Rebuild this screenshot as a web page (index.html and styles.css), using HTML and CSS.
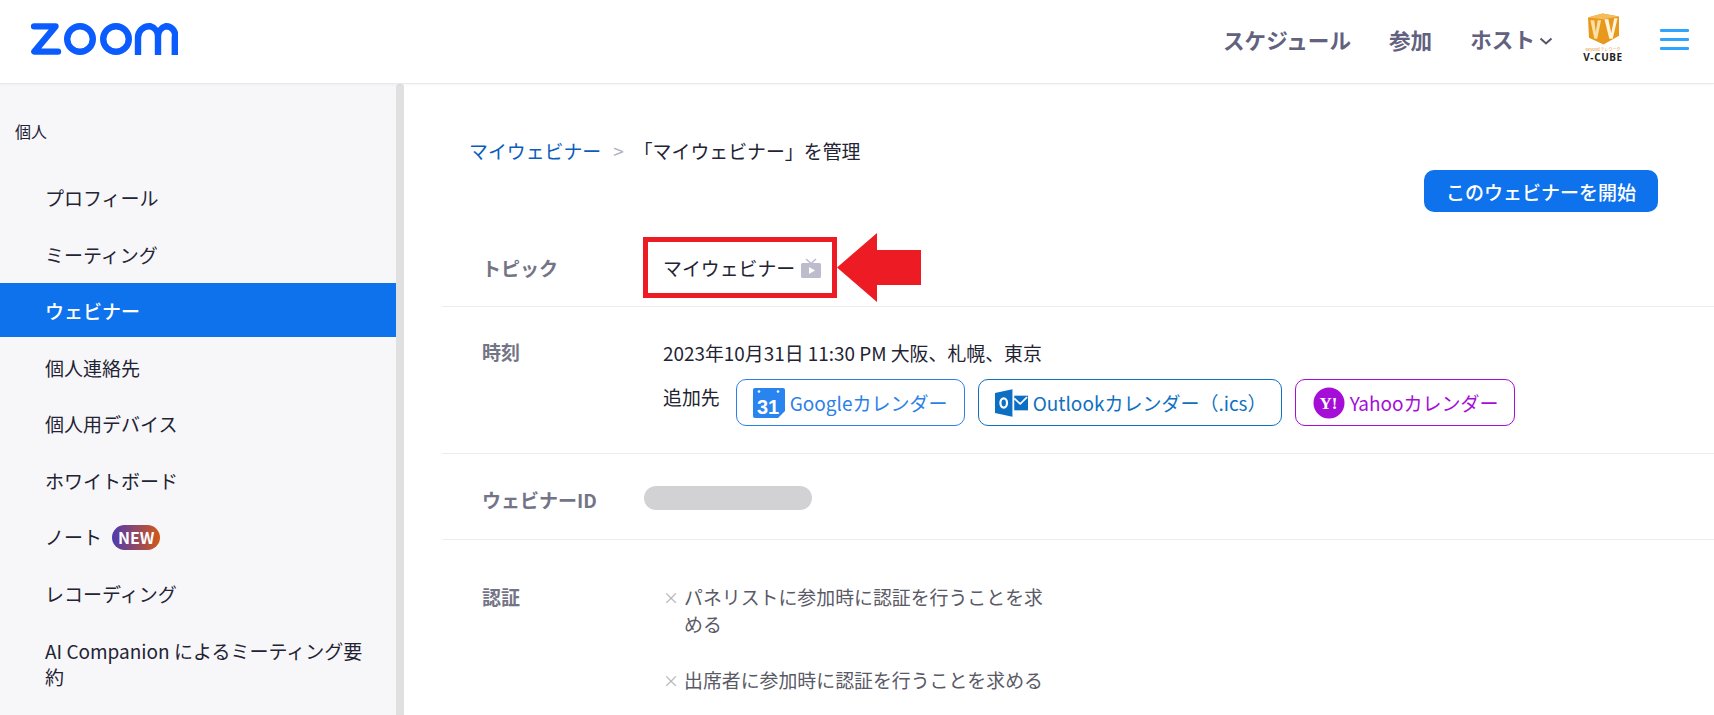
FILE: index.html
```html
<!DOCTYPE html>
<html lang="ja">
<head>
<meta charset="utf-8">
<title>マイウェビナー</title>
<link rel="stylesheet" href="styles.css">
</head>
<body>
<header class="topbar">
  <svg class="logo" viewBox="0 0 147 32" width="147" height="32" aria-label="zoom">
    <g fill="none" stroke="#0b5cff" stroke-width="6.4">
      <path d="M3 3.4H24.5L3.4 28.6H27" stroke-linejoin="round" stroke-linecap="round"/>
      <circle cx="49" cy="16" r="12.8"/>
      <circle cx="85" cy="16" r="12.8"/>
      <path d="M107 32V14.5A11.3 11.3 0 0 1 118.300 3.200H119A11 11 0 0 1 127 14.500V32M127 14.500A11 11 0 0 1 135 3.200A9 9 0 0 1 143.800 14.500V32"/>
    </g>
  </svg>
  <nav class="topnav">
    <a class="topnav-link">スケジュール</a>
    <a class="topnav-link">参加</a>
    <a class="topnav-link host">ホスト<svg class="caret" viewBox="0 0 14 8" width="14" height="8"><path d="M1.500 1.500 7 6.500 12.500 1.500" fill="none" stroke="#55556a" stroke-width="2"/></svg></a>
    <div class="brand">
      <svg viewBox="0 0 32 32" width="31" height="32">
        <path d="M0 4 15 0 32 3V23L16 32 1 25Z" fill="#e8981a"/>
        <path d="M0 4 15 0 32 3 16 6Z" fill="#f4bc5a"/>
        <path d="M2.500 7H6.500L8 19 10 7H13.500L9.500 26H6.500Z" fill="#f9dfa8"/>
        <path d="M17 6H21L24 20 27 5H30.500L25.500 26H22Z" fill="#fff4dc"/>
      </svg>
      <span class="brand-tag">Beyond テレワーク</span>
      <span class="brand-name">V-CUBE</span>
    </div>
    <div class="burger"><i></i><i></i><i></i></div>
  </nav>
</header>
<div class="layout">
  <aside class="sidebar">
    <div class="side-title">個人</div>
    <ul class="side-list">
      <li class="side-item">プロフィール</li>
      <li class="side-item">ミーティング</li>
      <li class="side-item active">ウェビナー</li>
      <li class="side-item">個人連絡先</li>
      <li class="side-item">個人用デバイス</li>
      <li class="side-item">ホワイトボード</li>
      <li class="side-item">ノート<span class="badge">NEW</span></li>
      <li class="side-item">レコーディング</li>
      <li class="side-item">AI Companion によるミーティング要約</li>
    </ul>
  </aside>
  <div class="scrolltrack"></div>
  <main class="content">
    <div class="crumbs"><a class="crumb-link">マイウェビナー</a><span class="crumb-sep">&gt;</span><span>「マイウェビナー」を管理</span></div>
    <div class="actions"><button class="start">このウェビナーを開始</button></div>
    <section class="row row-topic">
      <div class="label">トピック</div>
      <div class="value topic">マイウェビナー
        <svg class="tv" viewBox="0 0 20 20" width="20" height="20"><path d="M5 1 10 5.500 15 1" fill="none" stroke="#bcbccd" stroke-width="1.600"/><rect y="5" width="20" height="15" rx="1.500" fill="#bcbccd"/><path d="M8 9 14 12.500 8 16Z" fill="#fff"/></svg>
        <span class="mark"></span>
        <svg class="arrow" viewBox="0 0 84 69" width="84" height="69"><path d="M0 34.500 40 0V17H84V52H40V69Z" fill="#ed1c24"/></svg>
      </div>
    </section>
    <section class="row row-time">
      <div class="label">時刻</div>
      <div class="value">
        <div class="when">2023年10月31日 11:30 PM 大阪、札幌、東京</div>
        <div class="addto">
          <span class="addto-label">追加先</span>
          <a class="cal cal-google">
            <svg viewBox="0 0 32 30" width="32" height="30"><path d="M2 0H30A2 2 0 0 1 32 2V23L25 30H2A2 2 0 0 1 0 28V2A2 2 0 0 1 2 0Z" fill="#2a84f0"/><circle cx="6" cy="3.500" r="1.300" fill="#fff"/><circle cx="25" cy="3.500" r="1.300" fill="#fff"/><text x="15" y="26" class="cal-num">31</text></svg>
            Googleカレンダー</a>
          <a class="cal cal-outlook">
            <svg viewBox="0 0 36 30" width="33" height="30"><path d="M0 4 19 0V30L0 26Z" fill="#0d6fc4"/><ellipse cx="9.500" cy="15" rx="3.600" ry="5" fill="none" stroke="#fff" stroke-width="2.400"/><rect x="21" y="7" width="15" height="16" fill="#0d6fc4"/><path d="M21 10 27.500 16 35 8.500" fill="none" stroke="#fff" stroke-width="1.800"/></svg>
            Outlookカレンダー（.ics）</a>
          <a class="cal cal-yahoo">
            <svg viewBox="0 0 32 32" width="32" height="32"><circle cx="16" cy="16" r="15.500" fill="#a50ed6"/><text x="15.500" y="21.500" class="y-mark">Y!</text></svg>
            Yahooカレンダー</a>
        </div>
      </div>
    </section>
    <section class="row row-id">
      <div class="label">ウェビナーID</div>
      <div class="value"><div class="redacted"></div></div>
    </section>
    <section class="row row-auth">
      <div class="label">認証</div>
      <div class="value auth">
        <div class="check"><span class="x">×</span><span>パネリストに参加時に認証を行うことを求める</span></div>
        <div class="check"><span class="x">×</span><span>出席者に参加時に認証を行うことを求める</span></div>
      </div>
    </section>
  </main>
</div>
</body>
</html>
```

FILE: styles.css
```css
* { box-sizing: border-box; }
html, body { margin: 0; height: 715px; overflow: hidden; }
body {
  font-family: "Noto Sans CJK JP", "Noto Sans", sans-serif;
  color: #232333;
  background: #fff;
  display: flex;
  flex-direction: column;
}
.topbar {
  flex: 0 0 84px;
  display: flex;
  align-items: flex-start;
  justify-content: space-between;
  padding: 23px 25px 0 31px;
  border-bottom: 1px solid #e9e9ec;
  box-shadow: 0 1px 2px rgba(0,0,0,.04);
  position: relative;
}
.topnav { display: flex; align-items: flex-start; margin-top: -10px; }
.topnav-link {
  font-size: 21.600px;
  font-weight: 700;
  line-height: 30px;
  color: #626280;
  margin-top: 12px;
  margin-right: 38px;
}
.topnav-link.host { margin-right: 0; margin-top: 11px; display: flex; align-items: center; }
.caret { margin-left: 4px; margin-top: 4px; }
.brand {
  width: 44px;
  margin-left: 28px;
  display: flex;
  flex-direction: column;
  align-items: center;
}
.brand-tag { font-size: 4px; line-height: 6px; color: #e8902a; white-space: nowrap; margin-top: 1px; }
.brand-name { font-size: 10px; line-height: 10px; font-weight: 700; letter-spacing: .6px; color: #222; font-family: "Noto Sans", sans-serif; white-space: nowrap; }
.burger { width: 29px; margin-left: 35px; margin-top: 16px; display: flex; flex-direction: column; gap: 6.500px; }
.burger i { display: block; height: 2.500px; background: #2da5ff; border-radius: 1px; }
.layout { flex: 1; display: flex; min-height: 0; }
.sidebar { width: 396px; background: #f7f7fa; padding: 35px 0 0; overflow: hidden; }
.scrolltrack { width: 8px; background: #e0e0e0; border-radius: 3px 3px 0 0; }
.side-title { font-size: 16px; line-height: 24px; padding-left: 15px; color: #232333; margin-bottom: 27px; }
.side-list { list-style: none; margin: 0; padding: 0; }
.side-item {
  font-size: 19px;
  line-height: 26.600px;
  color: #232333;
  padding: 15px 30px 12.400px 45px;
  margin-bottom: 2.600px;
}
.side-item.active { background: #0e72ed; color: #fff; font-weight: 500; }
.badge {
  display: inline-block;
  margin-left: 10px;
  height: 25px;
  line-height: 25px;
  padding: 0 6px;
  border-radius: 13px;
  background: linear-gradient(90deg, #4f3ab0, #d2581a);
  color: #fff;
  font-size: 16px;
  font-weight: 700;
  vertical-align: 1px;
}
.content { flex: 1; min-width: 0; padding: 0 56px 0 38px; }
.crumbs { font-size: 18.900px; line-height: 28px; margin-top: 53px; padding-left: 27px; display: flex; }
.crumb-link { color: #0b5cbd; }
.crumb-sep { color: #b4b4be; margin: 0 10px 0 12px; }
.actions { display: flex; justify-content: flex-end; margin-top: 5px; }
.start {
  width: 234px;
  height: 42px;
  background: #0e72ed;
  color: #fff;
  border: 0;
  border-radius: 10px;
  font: 500 19px "Noto Sans CJK JP", sans-serif;
}
.row { display: flex; border-bottom: 1px solid #ededf0; margin-right: -56px; }
.label { width: 221px; padding-left: 40px; font-size: 19px; font-weight: 700; color: #747487; line-height: 28px; flex: none; }
.value { font-size: 18.900px; line-height: 28px; min-width: 0; }
.row-topic { height: 95px; padding-top: 42px; }
.topic { position: relative; display: flex; align-items: center; height: 28px; white-space: nowrap; }
.tv { margin-left: 6px; }
.mark { position: absolute; left: -20px; top: -17px; width: 194px; height: 61px; border: 5px solid #ed1c24; }
.arrow { position: absolute; left: 174px; top: -21px; }
.row-time { height: 147px; padding-top: 32px; }
.row-time .label { margin-top: -1px; }
.when { margin-bottom: 12px; }
.addto { display: flex; align-items: flex-start; }
.addto-label { margin-right: 16px; margin-top: 4px; }
.cal {
  height: 47px;
  display: inline-flex;
  align-items: center;
  border: 1px solid;
  border-radius: 10px;
  font-size: 19px;
  white-space: nowrap;
  gap: 5px;
  margin-right: 13px;
  padding-left: 16px;
}
.cal-google { width: 229px; color: #2d7fe8; border-color: #2d7fe8; }
.cal-outlook { width: 304px; color: #0f70c0; border-color: #0f70c0; gap: 5px; }
.cal-yahoo { width: 220px; color: #a50ed6; border-color: #a50ed6; padding-left: 17px; }
.cal-num { font: 700 20px "Liberation Sans", sans-serif; fill: #fff; text-anchor: middle; }
.y-mark { font: 700 17px "Liberation Serif", serif; fill: #fff; text-anchor: middle; }
.row-id { height: 86px; padding-top: 32px; }
.redacted { width: 168px; height: 24px; background: #d2d2d5; border-radius: 12px; margin-left: -19px; }
.row-auth { border-bottom: 0; padding-top: 43px; }
.auth { width: 384px; color: #5a5a66; line-height: 26.600px; margin-top: 1px; }
.check { display: flex; margin-bottom: 30px; }
.x { color: #b4b4b8; width: 21px; flex: none; font-size: 16px; }
```
